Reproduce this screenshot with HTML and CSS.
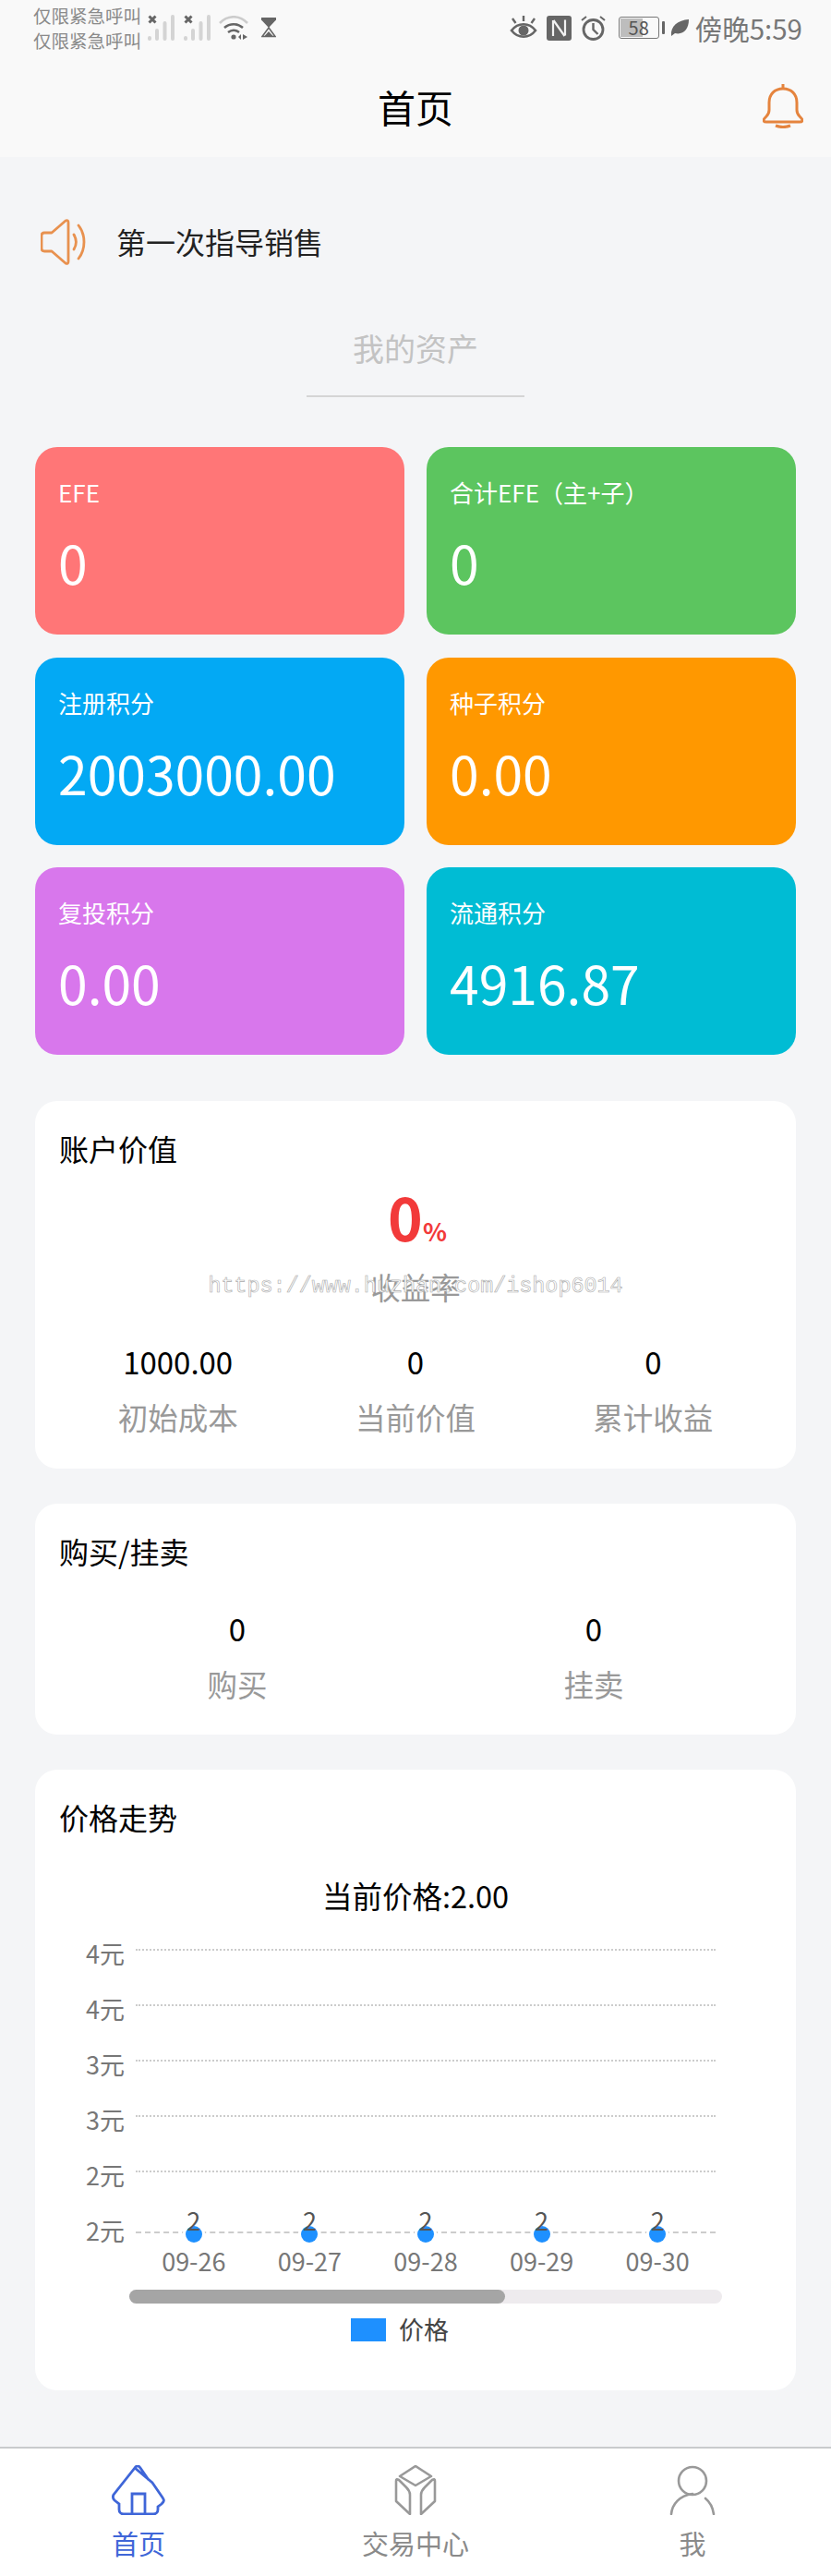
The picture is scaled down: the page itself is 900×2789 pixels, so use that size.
FILE: index.html
```html
<!DOCTYPE html>
<html lang="zh-CN">
<head>
    <meta charset="UTF-8">
    <meta name="viewport" content="width=device-width, initial-scale=1.0">
    <title>首页</title>
    <link rel="stylesheet" href="styles.css">
</head>
<body>
<div class="page">
    <header class="top">
        <div class="status">
            <div class="status-left">
                <div class="sim"><span>仅限紧急呼叫</span><span>仅限紧急呼叫</span></div>
                <svg class="sig" viewBox="0 0 30 28"><path d="M1.5 1.5l7 7M8.500 1.500l-7 7" stroke="#666" stroke-width="3"/><path d="M2 25v1M10 17v9M18.500 9v17M27 2v24" stroke="#d4d4d4" stroke-width="4" stroke-linecap="round"/></svg>
                <svg class="sig sig2" viewBox="0 0 30 28"><path d="M1.5 1.5l7 7M8.500 1.500l-7 7" stroke="#666" stroke-width="3"/><path d="M2 25v1M10 17v9M18.500 9v17M27 2v24" stroke="#d4d4d4" stroke-width="4" stroke-linecap="round"/></svg>
                <svg class="wifi" viewBox="0 0 32 26"><path d="M1 8c9-9 21-9 30 0" fill="none" stroke="#ccc" stroke-width="2.600"/><path d="M6 13c6-5 14-5 20 0M10 18c4-3 8-3 12 0" fill="none" stroke="#666" stroke-width="2.600"/><circle cx="16" cy="23" r="2.600" fill="#666"/><path d="M24 20v6l-3-3zM26 20v6l5-3z" fill="#666"/></svg>
                <svg class="glass" viewBox="0 0 16 22"><path d="M0 0h16v2.500l-8 8.500-8-8.500z" fill="#666"/><path d="M8 11l7 9.500H1z" fill="none" stroke="#666" stroke-width="1.600"/><path d="M3.500 20l4.500-5 4.500 5z" fill="#666"/></svg>
            </div>
            <div class="status-right">
                <svg class="st-eye" viewBox="0 0 30 26"><path d="M2 16c7-9 19-9 26 0-7 9-19 9-26 0z" fill="none" stroke="#666" stroke-width="2.600"/><circle cx="15" cy="16" r="5.500" fill="#666"/><path d="M3 3l3.500 5M15 0v6M27 3l-3.500 5" stroke="#666" stroke-width="2.400"/></svg>
                <svg class="st-nfc" viewBox="0 0 27 27"><rect width="27" height="27" rx="3" fill="#666"/><path d="M7 5v17M20 4.500v17M7.500 5l12 17" fill="none" stroke="#f2f2f2" stroke-width="2.200"/></svg>
                <svg class="st-clock" viewBox="0 0 27 27"><circle cx="13.500" cy="15" r="10.500" fill="none" stroke="#666" stroke-width="2.800"/><path d="M13.500 8v7l5 5" fill="none" stroke="#666" stroke-width="2.400"/><path d="M1 5l5-4M26 5l-5-4" stroke="#666" stroke-width="2"/></svg>
                <div class="batt"><div class="batt-box"><i class="batt-fill"></i><span>58</span></div><i class="batt-tip"></i></div>
                <svg class="st-leaf" viewBox="0 0 20 20"><path d="M1 19C0 8 8 2 20 1c0 11-6 17-15 15z" fill="#666"/></svg>
                <span class="clock">傍晚5:59</span>
            </div>
        </div>
        <div class="nav">
            <h1>首页</h1>
            <svg class="bell" viewBox="0 0 44 48"><path d="M22 5c-9 0-15 6-15 15v8c0 3-1 5-3 7s-3 3-3 4c0 1 1 2 3 2h36c2 0 3-1 3-2 0-1-1-2-3-4s-3-4-3-7v-8c0-9-6-15-15-15z" fill="none" stroke="#e5843e" stroke-width="3"/><path d="M22 0v4" stroke="#e5843e" stroke-width="3"/><path d="M14 45c5 2 11 2 16 0" fill="none" stroke="#e5843e" stroke-width="3"/></svg>
        </div>
    </header>

    <div class="notice">
        <svg class="horn" viewBox="0 0 50 50"><path d="M27 2 12 15H4c-2 0-3 1-3 3v14c0 2 1 3 3 3h8l15 13c2 1 3 0 3-2V4c0-2-1-3-3-2z" fill="none" stroke="#e8914f" stroke-width="2.800" stroke-linejoin="round"/><path d="M36 17c3 5 3 11 0 16M41 7c8 10 8 26 0 36" fill="none" stroke="#e8914f" stroke-width="2.800" stroke-linecap="round"/></svg>
        <span>第一次指导销售</span>
    </div>

    <div class="assets-title"><span>我的资产</span></div>

    <div class="tiles">
        <div class="tile red"><p>EFE</p><strong>0</strong></div>
        <div class="tile green"><p>合计EFE（主+子）</p><strong>0</strong></div>
        <div class="tile blue"><p>注册积分</p><strong>2003000.00</strong></div>
        <div class="tile orange"><p>种子积分</p><strong>0.00</strong></div>
        <div class="tile purple"><p>复投积分</p><strong>0.00</strong></div>
        <div class="tile cyan"><p>流通积分</p><strong>4916.87</strong></div>
    </div>

    <section class="card card-value">
        <h2>账户价值</h2>
        <div class="rate"><b>0</b><small>%</small></div>
        <div class="rate-label">
            <span>收益率</span>
            <em class="mark">https://www.huzhan.com/ishop6014</em>
        </div>
        <div class="stats">
            <div class="stat"><b>1000.00</b><span>初始成本</span></div>
            <div class="stat"><b>0</b><span>当前价值</span></div>
            <div class="stat"><b>0</b><span>累计收益</span></div>
        </div>
    </section>

    <section class="card card-trade">
        <h2>购买/挂卖</h2>
        <div class="stats">
            <div class="stat"><b>0</b><span>购买</span></div>
            <div class="stat"><b>0</b><span>挂卖</span></div>
        </div>
    </section>

    <section class="card card-chart">
        <h2>价格走势</h2>
        <div class="price-now">当前价格:2.00</div>
        <div class="chart">
            <div class="grid-row"><span>4元</span><i></i></div>
            <div class="grid-row"><span>4元</span><i></i></div>
            <div class="grid-row"><span>3元</span><i></i></div>
            <div class="grid-row"><span>3元</span><i></i></div>
            <div class="grid-row"><span>2元</span><i></i></div>
            <div class="grid-row last"><span>2元</span><i></i></div>
            <div class="points">
                <div class="point"><i></i><u>2</u></div>
                <div class="point"><i></i><u>2</u></div>
                <div class="point"><i></i><u>2</u></div>
                <div class="point"><i></i><u>2</u></div>
                <div class="point"><i></i><u>2</u></div>
            </div>
        </div>
        <div class="days"><span>09-26</span><span>09-27</span><span>09-28</span><span>09-29</span><span>09-30</span></div>
        <div class="scroll"><div class="thumb"></div></div>
        <div class="legend"><i></i><span>价格</span></div>
    </section>

    <nav class="tabbar">
        <div class="tab active">
            <svg viewBox="0 0 60 54"><path d="M26 3c2-3 4-3 6 0l9 13M45 19l11 16c2 3 2 4-1 7l-4 3v3c0 3-2 5-5 5H14c-3 0-5-2-5-5v-6l-5-4c-2-2-2-4-1-6L26 3z" fill="none" stroke="#3f66d8" stroke-width="2.800"/><path d="M23 52V31h14v21" fill="none" stroke="#3f66d8" stroke-width="2.800"/></svg>
            <span>首页</span>
        </div>
        <div class="tab">
            <svg viewBox="0 0 50 54"><path d="M25 1 42 12 25 22 8 12z" fill="none" stroke="#999" stroke-width="2.600" stroke-linejoin="round"/><path d="M4 17v22l15 14V32c0-3-1-5-4-8L7 16c-2-1-3-1-3 1zM46 17v22L31 53V32c0-3 1-5 4-8l8-8c2-1 3-1 3 1z" fill="none" stroke="#999" stroke-width="2.600" stroke-linejoin="round"/></svg>
            <span>交易中心</span>
        </div>
        <div class="tab">
            <svg viewBox="0 0 50 54"><circle cx="25" cy="17" r="15" fill="none" stroke="#999" stroke-width="2.600"/><path d="M25 31C11 33 3 42 2 53M39 36c5 4 8 10 9 17" fill="none" stroke="#999" stroke-width="2.600" stroke-linecap="round"/></svg>
            <span>我</span>
        </div>
    </nav>
</div>
</body>
</html>
```

FILE: styles.css
```css
* {
    box-sizing: border-box;
}
body {
    margin: 0;
    background-color: #f4f5f7;
    font-family: "Noto Sans CJK SC", "Noto Sans", sans-serif;
    color: #000;
}
h1, h2, p {
    margin: 0;
    font-weight: normal;
}
svg {
    display: block;
}
.page {
    width: 900px;
    height: 2789px;
    display: flex;
    flex-direction: column;
    overflow: hidden;
}

/* status bar + title */
.top {
    height: 170px;
    background-color: #f9f9f9;
}
.status {
    height: 60px;
    padding: 0 31px 0 36px;
    display: flex;
    justify-content: space-between;
    align-items: center;
    color: #777;
}
.status-left, .status-right {
    display: flex;
    align-items: center;
}
.sim {
    display: flex;
    flex-direction: column;
    font-size: 19.5px;
    line-height: 27.500px;
    color: #8a8a8a;
    width: 124px;
}
.sig {
    width: 30px;
    height: 28px;
}
.sig2 {
    margin-left: 9px;
}
.wifi {
    width: 32px;
    height: 26px;
    margin-left: 8px;
}
.glass {
    width: 16px;
    height: 22px;
    margin-left: 14px;
}
.st-eye {
    width: 30px;
    height: 26px;
}
.st-nfc {
    width: 27px;
    height: 27px;
    margin-left: 10px;
}
.st-clock {
    width: 27px;
    height: 27px;
    margin-left: 10px;
}
.batt {
    display: flex;
    align-items: center;
    margin-left: 14px;
}
.batt-box {
    position: relative;
    width: 44px;
    height: 24px;
    border: 1.5px solid #777;
    border-radius: 3px;
    font-size: 20px;
    line-height: 21px;
    text-align: center;
    color: #555;
}
.batt-box span {
    position: relative;
}
.batt-fill {
    position: absolute;
    left: 1px;
    top: 1px;
    bottom: 1px;
    width: 58%;
    background-color: #bdbdbd;
}
.batt-tip {
    width: 3px;
    height: 14px;
    margin-left: 3px;
    background-color: #666;
    border-radius: 1px;
}
.st-leaf {
    width: 20px;
    height: 20px;
    margin-left: 6px;
}
.clock {
    margin-left: 7px;
    font-size: 29.5px;
    line-height: 30px;
    color: #777;
}
.nav {
    position: relative;
    height: 110px;
    display: flex;
    align-items: center;
    justify-content: center;
}
.nav h1 {
    font-size: 41px;
    line-height: 50px;
}
.bell {
    position: absolute;
    right: 30px;
    top: 31px;
    width: 44px;
    height: 48px;
}

.notice {
    margin-top: 67px;
    padding-left: 44px;
    height: 50px;
    display: flex;
    align-items: center;
    font-size: 32px;
    color: #222;
}
.notice span {
    margin-left: 32px;
    margin-top: -2px;
}
.horn {
    width: 50px;
    height: 50px;
}
.assets-title {
    margin-top: 67px;
    display: flex;
    justify-content: center;
}
.assets-title span {
    width: 236px;
    height: 76px;
    border-bottom: 2px solid #d5d5d5;
    text-align: center;
    font-size: 34px;
    line-height: 46px;
    color: #c3c3c3;
}

/* coloured tiles */
.tiles {
    margin-top: 54px;
    padding: 0 38px;
    display: grid;
    grid-template-columns: 400px 400px;
    grid-auto-rows: 203px;
    gap: 24.5px 24px;
}
.tile {
    border-radius: 24px;
    padding: 31px 25px;
    color: #fff;
}
.tile p {
    font-size: 26px;
    line-height: 36px;
}
.tile strong {
    display: block;
    margin-top: 21px;
    font-size: 57px;
    line-height: 72px;
    font-weight: normal;
}
.red { background-color: #ff7677; }
.green { background-color: #5cc55f; }
.blue { background-color: #03a9f4; }
.orange { background-color: #ff9800; }
.purple { background-color: #d877ec; }
.cyan { background-color: #00bcd4; }

/* white cards */
.card {
    margin: 0 38px;
    background-color: #fff;
    border-radius: 24px;
    padding: 28px 26px 0;
}
.card h2 {
    font-size: 32px;
    line-height: 46px;
}
.card-value {
    margin-top: 50px;
    height: 398px;
}
.card-trade {
    margin-top: 38px;
    height: 250px;
}
.card-chart {
    margin-top: 38px;
    height: 672px;
}
.rate {
    margin-top: 15px;
    text-align: center;
    color: #f23a3a;
    line-height: 70px;
    height: 70px;
}
.rate b {
    font-size: 64px;
    margin-left: 4px;
}
.rate small {
    font-size: 27px;
    font-weight: bold;
}
.rate-label {
    position: relative;
    margin-top: 17px;
    text-align: center;
    font-size: 32.5px;
    line-height: 50px;
    color: #999;
}
.mark {
    position: absolute;
    left: 0;
    right: 0;
    top: 7px;
    font-family: "Liberation Mono", monospace;
    font-style: normal;
    font-size: 23.4px;
    line-height: 36px;
    color: #fff;
    -webkit-text-stroke: .6px #aaa;
}
.stats {
    display: flex;
    margin-top: 33px;
    text-align: center;
}
.stat {
    flex: 1;
    display: flex;
    flex-direction: column;
}
.stat b {
    font-weight: normal;
    font-size: 33px;
    line-height: 46px;
}
.stat span {
    margin-top: 12px;
    font-size: 32.5px;
    line-height: 50px;
    color: #999;
}
.card-trade .stats {
    margin-top: 38px;
}

/* chart */
.price-now {
    margin-top: 39px;
    text-align: center;
    font-size: 32.5px;
    line-height: 46px;
}
.chart {
    position: relative;
    margin-top: 24px;
}
.grid-row {
    height: 60px;
    display: flex;
    align-items: flex-start;
    color: #777;
    font-size: 27px;
    line-height: 36px;
}
.grid-row span {
    width: 54px;
    margin: -2px 0 0 29px;
    flex: none;
}
.grid-row i {
    width: 628px;
    margin: 11px 0 0 0;
    border-top: 2px dotted #ccc;
}
.grid-row.last {
    height: 31px;
}
.grid-row.last i {
    margin-top: 17px;
    border-top-style: dashed;
}
.points {
    position: absolute;
    left: 83px;
    bottom: 0;
    width: 628px;
    display: flex;
}
.point {
    position: relative;
    flex: 1;
    height: 31px;
}
.point u {
    position: absolute;
    left: 0;
    right: 0;
    top: -13px;
    text-align: center;
    text-decoration: none;
    color: #555;
    font-size: 27px;
    line-height: 36px;
}
.point i {
    position: absolute;
    left: 50%;
    top: 11px;
    margin-left: -9px;
    width: 18px;
    height: 18px;
    border-radius: 50%;
    background-color: #1e90ff;
    box-shadow: 0 0 0 3px #fff;
}
.days {
    display: flex;
    margin-left: 83px;
    width: 628px;
    color: #777;
    font-size: 27px;
    line-height: 36px;
}
.days span {
    flex: 1;
    text-align: center;
}
.scroll {
    margin: 13px 0 0 76px;
    width: 642px;
    height: 15px;
    border-radius: 8px;
    background-color: #eeebee;
}
.thumb {
    width: 407px;
    height: 15px;
    border-radius: 8px;
    background-color: #a5a5a5;
}
.legend {
    margin-top: 10px;
    display: flex;
    justify-content: center;
    align-items: center;
    font-size: 27px;
    line-height: 36px;
    color: #444;
    padding-right: 34px;
}
.legend i {
    width: 38px;
    height: 25px;
    background-color: #1e90ff;
    margin-right: 14px;
}

/* bottom tabs */
.tabbar {
    margin-top: auto;
    height: 140px;
    background-color: #fff;
    border-top: 2px solid #c9cacc;
    display: grid;
    grid-template-columns: 300px 300px 300px;
    text-align: center;
}
.tab {
    display: flex;
    flex-direction: column;
    align-items: center;
    padding-top: 18px;
    color: #8a8a8a;
    font-size: 29px;
    line-height: 40px;
}
.tab svg {
    width: 60px;
    height: 54px;
    margin-bottom: 10px;
}
.tab.active {
    color: #3f66d8;
}
```
